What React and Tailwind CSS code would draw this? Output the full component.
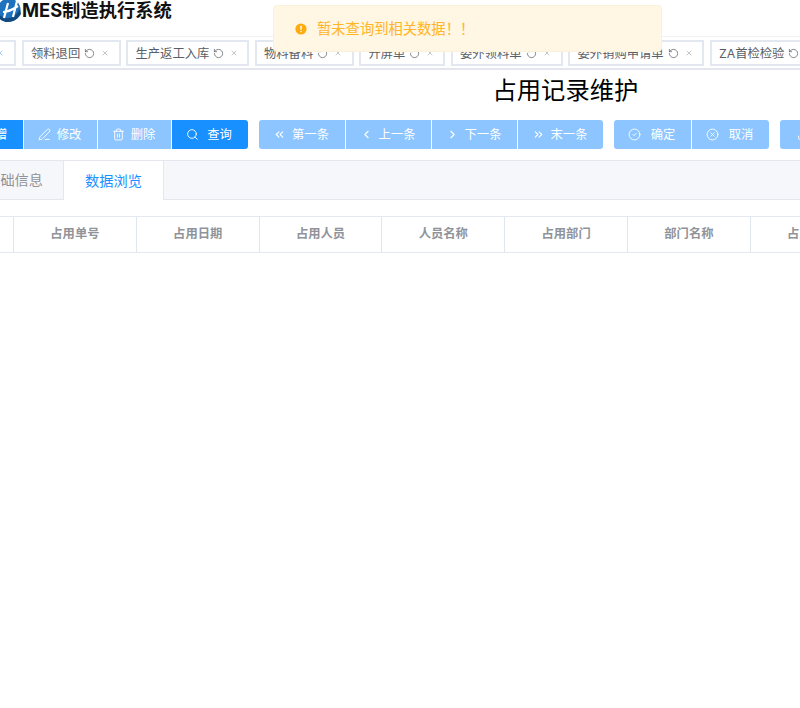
import React from "react";
import { RotateCcw, X, PenLine, Trash2, Search, ChevronsLeft, ChevronLeft, ChevronRight, ChevronsRight, CircleCheck, CircleX, Plus, Upload } from "lucide-react";

const font = "font-['Inter','Noto_Sans_CJK_SC',sans-serif]";

const tags = [
  { t: "领料退回", w: "w-[99px]" },
  { t: "生产返工入库", w: "w-[123px]" },
  { t: "物料备料", w: "w-[99px]" },
  { t: "开屏单", w: "w-[86px]" },
  { t: "委外领料单", w: "w-[112px]" },
  { t: "委外销购申请单", w: "w-[136px]" },
  { t: "ZA首检检验", w: "w-[120px]" },
];

function Tag({ t, w }) {
  return (
    <div className={`${w} h-[26px] shrink-0 border-2 border-[#e3e7f0] bg-white flex items-center pl-[7.5px] text-[12.3px] leading-[24px] text-[#5a5e66] whitespace-nowrap`}>
      <span className="translate-y-px">{t}</span>
      <RotateCcw size={11} strokeWidth={1.6} className="ml-[4px] shrink-0" />
      <X size={8} strokeWidth={1.5} className="ml-[6px] shrink-0 text-[#8a8f99]" />
    </div>
  );
}

function Btn({ Icon, label, w, tone = "light", first, last, gap = "gap-[6px]", stroke = 1.7 }) {
  const bg = tone === "dark" ? "bg-[#1890ff]" : "bg-[#8cc5ff]";
  const radius = `${first ? "rounded-l-[3px]" : ""} ${last ? "rounded-r-[3px]" : ""}`;
  return (
    <div className={`${w} ${bg} ${radius} ${gap} h-[29px] shrink-0 flex items-center justify-center text-[12.3px] text-white whitespace-nowrap`}>
      <Icon size={13} strokeWidth={stroke} className="-translate-x-px" />
      <span className="translate-y-px -translate-x-px">{label}</span>
    </div>
  );
}

const heads = ["占用单号", "占用日期", "占用人员", "人员名称", "占用部门", "部门名称", "占用时间"];

export default function App() {
  return (
    <div className={`${font} relative w-[800px] h-[708px] overflow-hidden bg-white`}>
      <header className="h-[36px] flex items-start">
        <svg width="22" height="22" viewBox="0 0 22 22" className="shrink-0">
          <circle cx="9" cy="10" r="11.5" fill="#1f72bd" />
          <path d="M-2 13 C3 20 13 21 20 9 L21 14 C16 23 4 25 -2 17Z" fill="#124a80" />
          <path d="M8 3 L4 18 M17 1 L13 17 M3 12 C8 12 12 10 18 6" stroke="#fff" strokeWidth="2.2" fill="none" />
        </svg>
        <span className="text-[18.3px] leading-[21px] font-bold text-[#111] whitespace-nowrap">MES制造执行系统</span>
      </header>

      <nav className="h-[34px] border-t border-t-[#f0f1f4] border-b-2 border-b-[#e3e6ec] flex items-center gap-[5.5px] pt-px -ml-[20px] overflow-hidden">
        <div className="w-[36px] h-[26px] shrink-0 border-2 border-[#e3e7f0] bg-white flex items-center justify-start pl-[14px]">
          <X size={8} strokeWidth={1.5} className="text-[#409eff]" />
        </div>
        {tags.map((g) => <Tag key={g.t} t={g.t} w={g.w} />)}
      </nav>

      <h1 className="pl-[492.5px] h-[50px] text-[24.3px] leading-[40px] text-black whitespace-nowrap">占用记录维护</h1>

      <div className="flex h-[29px] -ml-[50px] gap-[11px]">
        <div className="flex gap-px">
          <Btn Icon={Plus} label="新增" w="w-[73px]" tone="dark" first />
          <Btn Icon={PenLine} label="修改" w="w-[73px]" />
          <Btn Icon={Trash2} label="删除" w="w-[73px]" />
          <Btn Icon={Search} label="查询" w="w-[76px]" tone="dark" last gap="gap-[8px]" />
        </div>
        <div className="flex gap-px">
          <Btn Icon={ChevronsLeft} label="第一条" w="w-[86px]" first stroke={2} />
          <Btn Icon={ChevronLeft} label="上一条" w="w-[85px]" stroke={2} />
          <Btn Icon={ChevronRight} label="下一条" w="w-[85px]" stroke={2} />
          <Btn Icon={ChevronsRight} label="末一条" w="w-[85px]" last stroke={2} />
        </div>
        <div className="flex gap-px">
          <Btn Icon={CircleCheck} label="确定" w="w-[77px]" first gap="gap-[10px]" />
          <Btn Icon={CircleX} label="取消" w="w-[77px]" last gap="gap-[10px]" />
        </div>
        <Btn Icon={Upload} label="导入" w="w-[80px]" first />
      </div>

      <div className="mt-[11px] h-[40px] border-y border-[#e4e7ed] bg-[#f5f7fa] flex -ml-[36px]">
        <div className="w-[100px] shrink-0 border-r border-[#e4e7ed] flex items-center justify-end pr-[20px] text-[14.2px] text-[#909399] whitespace-nowrap">基础信息</div>
        <div className="w-[100px] -mb-px shrink-0 bg-white border-r border-[#e4e7ed] flex items-center justify-center text-[14.2px] text-[#1890ff] whitespace-nowrap">数据浏览</div>
      </div>

      <div className="mt-[16px] h-[37px] border-y border-[#e4e8f0] flex -ml-[109px] text-[12.3px] font-bold text-[#909399]">
        <div className="w-[123px] shrink-0 border-r border-[#dfe6ec]" />
        {heads.map((h) => (
          <div key={h} className="w-[122.8px] shrink-0 border-r border-[#dfe6ec] flex items-center justify-center whitespace-nowrap">{h}</div>
        ))}
      </div>

      <div role="alert" className="absolute left-[273px] top-[5px] w-[389px] h-[47px] rounded-[4px] border border-[#fdf0d8] bg-[#fff6e3] flex items-center pl-[21px] text-[14.3px] text-[#ffb526] whitespace-nowrap">
        <svg width="12" height="12" viewBox="0 0 12 12" className="shrink-0">
          <circle cx="6" cy="6" r="5.6" fill="#ffaa0d" />
          <rect x="5.3" y="2.8" width="1.4" height="4" rx="0.5" fill="#fff" />
          <rect x="5.3" y="7.8" width="1.4" height="1.4" rx="0.5" fill="#fff" />
        </svg>
        <span className="ml-[10px]">暂未查询到相关数据！！</span>
      </div>
    </div>
  );
}
